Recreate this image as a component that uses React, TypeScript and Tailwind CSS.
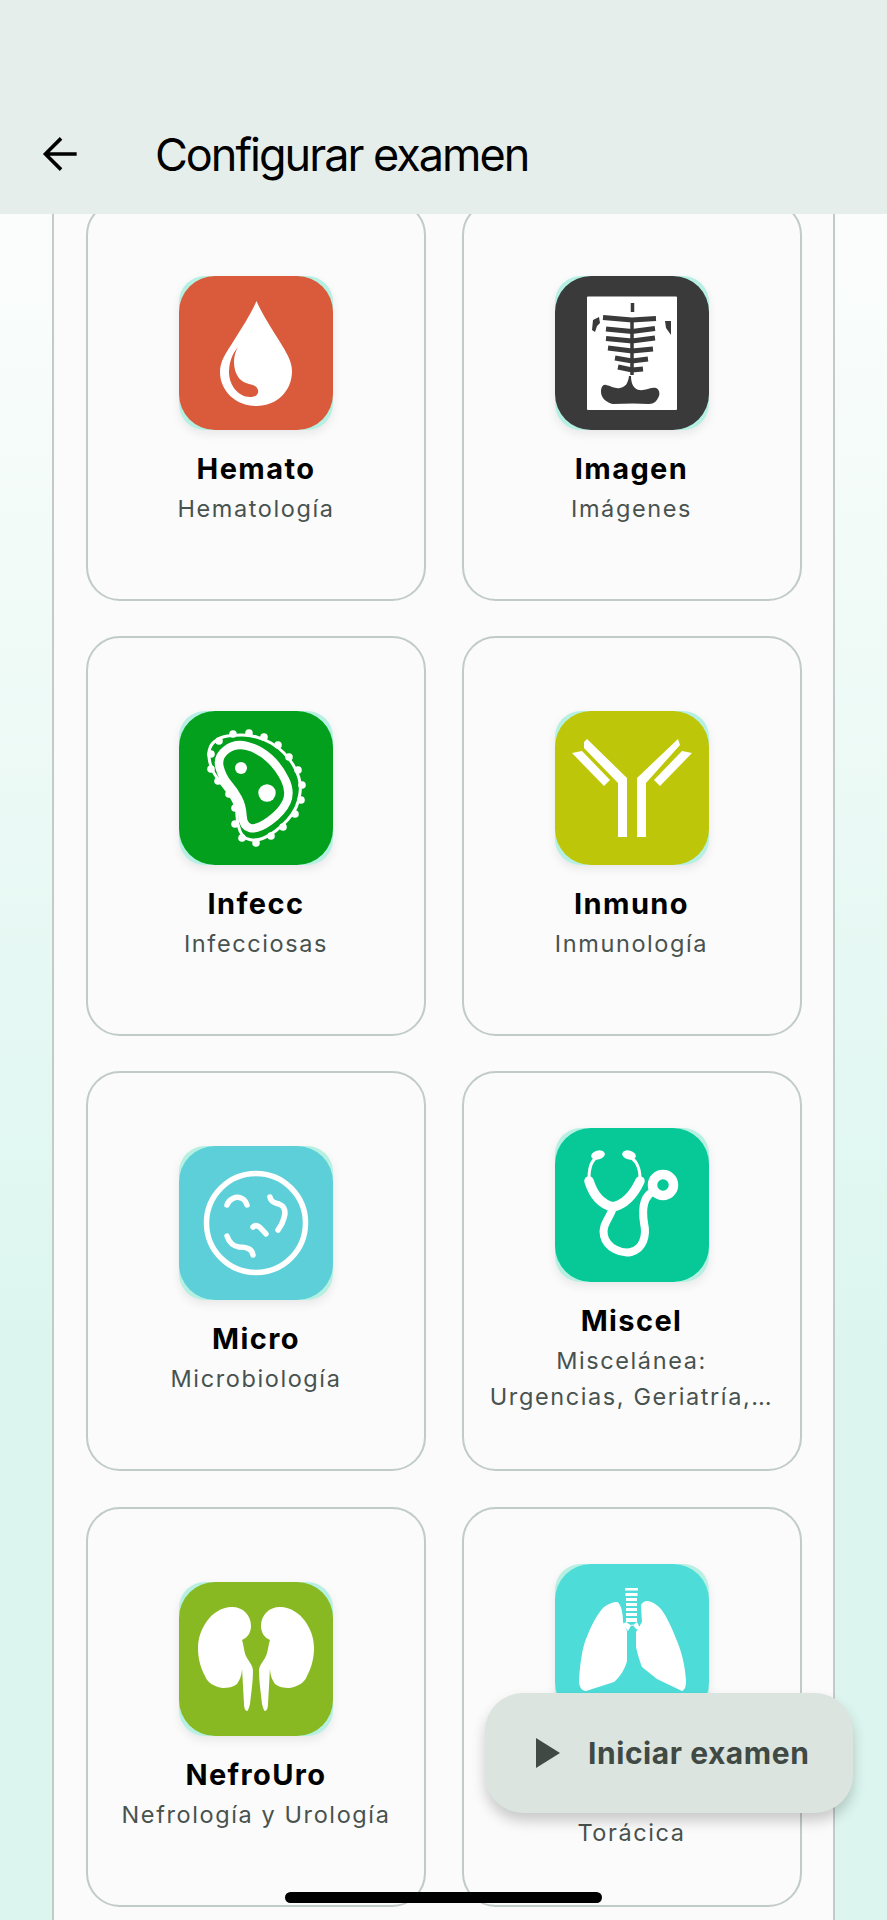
import type { ReactNode } from 'react'

// Curva cerrada suave que pasa por los puntos medios de una lista de puntos
function smoothPath(points: number[][]) {
  const mid = (a: number[], b: number[]) => [(a[0] + b[0]) / 2, (a[1] + b[1]) / 2]
  const start = mid(points[points.length - 1], points[0])
  let d = `M${start[0]} ${start[1]}`
  points.forEach((p, i) => {
    const m = mid(p, points[(i + 1) % points.length])
    d += ` Q${p[0]} ${p[1]} ${m[0]} ${m[1]}`
  })
  return d + 'Z'
}

const bumps = [
  [32, 43], [40, 30], [54, 23], [70, 22], [85, 26], [99, 34], [110, 46], [119, 59], [123, 74], [122, 89],
  [116, 103], [104, 116], [92, 125], [77, 132], [63, 127], [56, 113], [56, 97], [50, 83], [39, 70], [32, 58],
]

const outline = [
  [29, 36], [41, 26], [56, 24], [70, 24], [85, 28], [99, 36], [110, 47], [118, 60], [122, 74], [120, 90],
  [114, 103], [103, 115], [90, 125], [77, 130], [64, 127], [58, 113], [58, 97], [51, 83], [40, 70], [31, 56],
]

const bandPoints = [
  [56, 32], [80, 38], [100, 56], [112, 81], [103, 101], [78, 119], [64, 115], [63, 95], [55, 80], [43, 66], [38, 46],
]

function DropIcon() {
  return (
    <>
      <path d="M77.5 25C72 38 62 53 54 66C47 77 41 85 41 96C41 115 57 130 77 130C98 130 113 115 113 95C113 85 107 76 101 66C93 53 83 38 77.5 25Z" fill="#fff" />
      <path d="M59 71C53 78 50 87 50 96C50 110 60 121 71 121C77 121 80 118 79 114C78 110 74 109 70 108C62 106 58 101 56 94C54 86 55 78 59 71Z" fill="#d95b3b" />
    </>
  )
}

function XrayIcon() {
  const ribs = [
    'M48 41.5L77 44L101 42.5',
    'M51 53L77 55.5L100 52.5',
    'M51 62.5L77 65L100 62',
    'M53 72L77 75L98 73',
    'M60 82L77 85L93 83',
    'M63 91L77 94L88 93',
  ]
  return (
    <>
      <rect x="32" y="20.5" width="90" height="113.5" rx="1" fill="#fff" />
      <path d="M77.5 27V36M77 44V99" stroke="#3a3a3a" strokeWidth="3.5" />
      {ribs.map(d => (
        <path key={d} d={d} stroke="#3a3a3a" strokeWidth="5" fill="none" />
      ))}
      <path d="M46 116C46 111 48 108 51 109C56 110 60 113 65 112C70 111 73 108 74 100L76 100C76 108 79 113 84 114C90 115 96 111 101 112C104 113 105 117 104 120C102 125 99 128 94 128L78 127.5L58 128C52 127 46 122 46 116Z" fill="#3a3a3a" />
      <path d="M44 41L38 44L37 54L40 56L42 50L45 47Z" fill="#3a3a3a" />
      <path d="M110 45L116 45L116 59L111 52Z" fill="#3a3a3a" />
    </>
  )
}

function CellIcon() {
  return (
    <>
      <path d={smoothPath(outline)} fill="none" stroke="#fff" strokeWidth="3" />
      {bumps.map(([cx, cy]) => (
        <circle key={`${cx}-${cy}`} cx={cx} cy={cy} r="3.8" fill="#fff" />
      ))}
      <path d={smoothPath(bandPoints)} fill="none" stroke="#fff" strokeWidth="8.5" />
      <circle cx="62" cy="57" r="6" fill="#fff" />
      <circle cx="88" cy="82" r="8.7" fill="#fff" />
    </>
  )
}

function AntibodyIcon() {
  return (
    <g fill="#fff">
      <path d="M63 126V72L29 37V31L32 28L72 67V126Z" />
      <path d="M82 126V67L123 28L125 34L91 72V126Z" />
      <path d="M17 42L27 40L55 69L49 75Z" />
      <path d="M137 42L127 40L99 69L105 75Z" />
    </g>
  )
}

function GermsIcon() {
  return (
    <g fill="none" stroke="#fff" strokeWidth="5.5" strokeLinecap="round" strokeLinejoin="round">
      <circle cx="77" cy="77" r="49.5" />
      <path d="M48 59C50 53 57 50 62 52C65 53 67 56 68 59" />
      <path d="M91 51C92 56 96 57 100 58C106 60 107 66 105 72C104 76 102 80 99 84" />
      <path d="M74 81C78 77 82 82 87 88" />
      <path d="M48 90C50 96 54 100 60 101C67 101 73 102 74 109" />
    </g>
  )
}

function StethoscopeIcon() {
  return (
    <>
      <g fill="none" stroke="#fff" strokeLinecap="round">
        <path d="M44 28C37 31 34 40 34 50M73 28C81 31 85 40 85 50" strokeWidth="3" />
        <path d="M34 53C38 66 45 76 58 79C71 76 79 66 85 53" strokeWidth="9.5" />
        <path d="M58 79C56 89 46 97 49 108C52 120 66 126 76 124C88 121 92 108 89 95C87 82 88 68 99 63" strokeWidth="8" />
      </g>
      <ellipse cx="43" cy="27" rx="7" ry="4.5" fill="#fff" transform="rotate(-15 43 27)" />
      <ellipse cx="74" cy="27" rx="7" ry="4.5" fill="#fff" transform="rotate(15 74 27)" />
      <circle cx="108" cy="57" r="10.5" fill="none" stroke="#fff" strokeWidth="9.5" />
    </>
  )
}

function KidneysIcon() {
  const kidney =
    'M53 25C64 25 72 33 72 44C72 51 68 56 63 58C65 64 65 71 68 76C71 81 74 84 74 89C74 100 72 112 71 122C70 126 69 129 68 129C66 129 65 125 65 122L63 86C63 94 60 99 58 102C54 105 49 106 44 106C35 105 28 100 26 94C21 85 19 75 19 66C19 55 23 46 28 39C33 32 42 25 53 25Z'
  return (
    <g fill="#fff">
      <path d={kidney} />
      <path d={kidney} transform="translate(154 0) scale(-1 1)" />
    </g>
  )
}

function LungsIcon() {
  return (
    <g fill="#fff">
      <path d="M62 38C64 38 68 44 68 58L72 67L72 97C70 105 65 113 59 118L31 127C27 127 24 123 24 117C25 100 27 85 31 75C36 62 42 50 49 43C53 40 58 38 62 38Z" />
      <path d="M92 37C90 37 86 39 86 42L87 58L81 68L81 83C83 92 85 98 87 103L102 115L127 127C130 126 131 122 131 117C130 102 127 89 122 77C117 64 112 53 106 45C102 41 97 37 92 37Z" />
      <path d="M70 24H83V26.5H70ZM70.5 29H82.5V32H70.5ZM71 34H82V37H71ZM71 39H82V42H71ZM71 44H82V47H71ZM71 49H82V52H71ZM71 54H82V58H71ZM71 58L77 62L82 58L86 66L81 65L77 60L73 67L68 60Z" />
    </g>
  )
}

interface Specialty {
  short: string
  name: string
  bg: string
  icon: ReactNode
}

const specialties: Specialty[] = [
  { short: 'Hemato', name: 'Hematología', bg: 'bg-[#d95b3b]', icon: <DropIcon /> },
  { short: 'Imagen', name: 'Imágenes', bg: 'bg-[#3a3a3a]', icon: <XrayIcon /> },
  { short: 'Infecc', name: 'Infecciosas', bg: 'bg-[#03a01e]', icon: <CellIcon /> },
  { short: 'Inmuno', name: 'Inmunología', bg: 'bg-[#bec60a]', icon: <AntibodyIcon /> },
  { short: 'Micro', name: 'Microbiología', bg: 'bg-[#5dcfd9]', icon: <GermsIcon /> },
  { short: 'Miscel', name: 'Miscelánea:\nUrgencias, Geriatría,…', bg: 'bg-[#07c998]', icon: <StethoscopeIcon /> },
  { short: 'NefroUro', name: 'Nefrología y Urología', bg: 'bg-[#89b922]', icon: <KidneysIcon /> },
  { short: 'Neumo', name: 'Neumología y C.\nTorácica', bg: 'bg-[#4edcd9]', icon: <LungsIcon /> },
]

function SpecialtyCard({ short, name, bg, icon }: Specialty) {
  return (
    <div className="flex h-[400px] flex-col items-center justify-center rounded-[34px] border-2 border-[#c1cbc8] bg-[#fbfbfb] px-[16px] pt-[1px]">
      <div className="h-[154px] w-[154px] shrink-0 rounded-[26px] bg-[#b5f0e2] shadow-[0_4px_10px_rgba(0,0,0,0.08)]">
        <div className={`h-full w-full rounded-[36px] ${bg}`}>
          <svg viewBox="0 0 154 154" className="h-full w-full">
            {icon}
          </svg>
        </div>
      </div>
      <div className="mt-[19px] text-center text-[29px] leading-[40px] font-bold tracking-[1.4px] text-black">{short}</div>
      <div className="mt-[2px] text-center text-[23.5px] leading-[36px] tracking-[1.6px] whitespace-pre-line text-[#48524f]">{name}</div>
    </div>
  )
}

export default function App() {
  return (
    <div className="relative flex h-[1920px] w-[887px] flex-col overflow-hidden bg-gradient-to-b from-[#fbfdfc] from-[12%] to-[#dcf6ef] to-[70%] font-['Inter',sans-serif]">
      <header className="z-10 flex h-[214px] shrink-0 items-end bg-[#e6eeec] pl-[35px]">
        <svg viewBox="0 0 24 24" className="mb-[35px] h-[50px] w-[50px]">
          <path d="M20 12H5M12.5 4.5L5 12l7.5 7.5" fill="none" stroke="#000" strokeWidth="1.7" />
        </svg>
        <h1 className="mb-[29px] ml-[70px] text-[45px] leading-[60px] tracking-[-2px] text-black">Configurar examen</h1>
      </header>

      <main className="mx-[52px] flex-1 overflow-hidden border-x-2 border-[#c1cbc8] bg-[#fbfbfb] pl-[32px]">
        <div className="-mt-[13px] grid grid-cols-[340px_340px] gap-x-[35.5px] gap-y-[35.2px]">
          {specialties.map(s => (
            <SpecialtyCard key={s.short} {...s} />
          ))}
        </div>
      </main>

      <button className="absolute top-[1693px] left-[485px] flex h-[120px] w-[368px] items-center rounded-[38px] bg-[#dbe4df] pl-[51px] shadow-[0_8px_14px_rgba(0,0,0,0.2)]">
        <svg viewBox="0 0 24 30" className="h-[30px] w-[24px]">
          <path d="M0 0L24 15L0 30Z" fill="#404944" />
        </svg>
        <span className="ml-[28px] text-[30px] font-bold tracking-[0.55px] text-[#404944]">Iniciar examen</span>
      </button>

      <div className="absolute top-[1892px] left-[285px] h-[11px] w-[317px] rounded-full bg-black" />
    </div>
  )
}
